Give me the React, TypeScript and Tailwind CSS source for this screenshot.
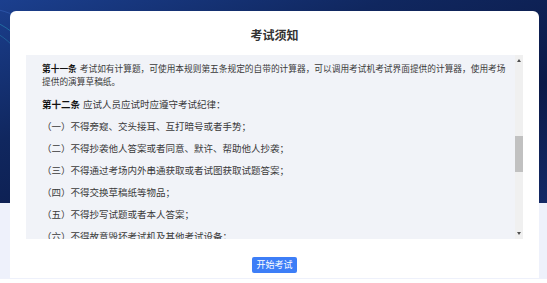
import type { ReactNode } from "react";

const rules: { label?: string; text: string; tight?: boolean }[] = [
  {
    label: "第十一条",
    text: "考试如有计算题，可使用本规则第五条规定的自带的计算器，可以调用考试机考试界面提供的计算器，使用考场提供的演算草稿纸。",
    tight: true,
  },
  { label: "第十二条", text: "应试人员应试时应遵守考试纪律：" },
  { text: "（一）不得旁窥、交头接耳、互打暗号或者手势；" },
  { text: "（二）不得抄袭他人答案或者同意、默许、帮助他人抄袭；" },
  { text: "（三）不得通过考场内外串通获取或者试图获取试题答案；" },
  { text: "（四）不得交换草稿纸等物品；" },
  { text: "（五）不得抄写试题或者本人答案；" },
  { text: "（六）不得故意毁坏考试机及其他考试设备；" },
  { text: "（七）不得将草稿纸等物品带出考场；" },
];

function Backdrop({ children }: { children?: ReactNode }) {
  return (
    <div className="relative h-[283px] w-[547px] overflow-hidden bg-white">
      <div className="relative h-[203px] bg-[linear-gradient(160deg,#1b3f8e_0%,#10275f_35%,#0b1a48_70%,#142a66_100%)]">
        <svg className="absolute left-0 top-0" width="120" height="120" viewBox="0 0 120 120" fill="none">
          <path d="M-10 20 C 20 30, 40 60, 70 110" stroke="#2fc1d6" strokeOpacity="0.45" strokeWidth="0.8" />
          <path d="M-10 30 C 15 40, 35 70, 55 120" stroke="#2fc1d6" strokeOpacity="0.35" strokeWidth="0.8" />
          <path d="M-10 8 C 30 15, 60 40, 90 100" stroke="#4a7fe0" strokeOpacity="0.4" strokeWidth="0.8" />
        </svg>
      </div>
      <div className="h-[76px] bg-[#eef1fb]" />
      {children}
    </div>
  );
}

export default function App() {
  return (
    <Backdrop>
      <div className="absolute left-[10px] top-[11px] flex h-[267px] w-[529px] flex-col items-center rounded-t-[6px] bg-white">
        <h1
          className="mt-[16px] text-[12px] font-bold leading-[16px] text-[#333]"
          style={{ fontFamily: '"Noto Sans CJK SC", sans-serif' }}
        >
          考试须知
        </h1>

        <div className="mt-[12px] flex h-[184px] w-[497px] bg-[#f1f3f8]">
          <div
            className="flex-1 overflow-hidden pl-[16px] pr-[8px] pt-[7px] text-[9.5px] leading-[13px] text-[#3a3a3a]"
            style={{ fontFamily: '"Noto Sans CJK SC", sans-serif' }}
          >
            {rules.map((r, idx) => (
              <p key={idx} className={r.tight ? "mb-[10px] text-[8.7px]" : "mb-[9px]"}>
                {r.label && <span className="mr-[3px] font-bold text-[#111]">{r.label}</span>}
                {r.text}
              </p>
            ))}
          </div>

          {/* scrollbar */}
          <div className="flex w-[8px] flex-col items-center bg-[#f0f0f0]">
            <div className="mt-[4px] h-0 w-0 border-x-[2.5px] border-b-[3px] border-x-transparent border-b-[#505050]" />
            <div className="mt-[74px] h-[36px] w-[8px] bg-[#c1c1c1]" />
            <div className="mt-auto mb-[4px] h-0 w-0 border-x-[2.5px] border-t-[3px] border-x-transparent border-t-[#505050]" />
          </div>
        </div>

        <button
          className="mt-[18px] h-[16px] w-[45px] rounded-[2px] bg-[#3d7ef7] text-[9px] leading-[16px] text-white"
          style={{ fontFamily: '"Noto Sans CJK SC", sans-serif' }}
        >
          开始考试
        </button>
      </div>
    </Backdrop>
  );
}
